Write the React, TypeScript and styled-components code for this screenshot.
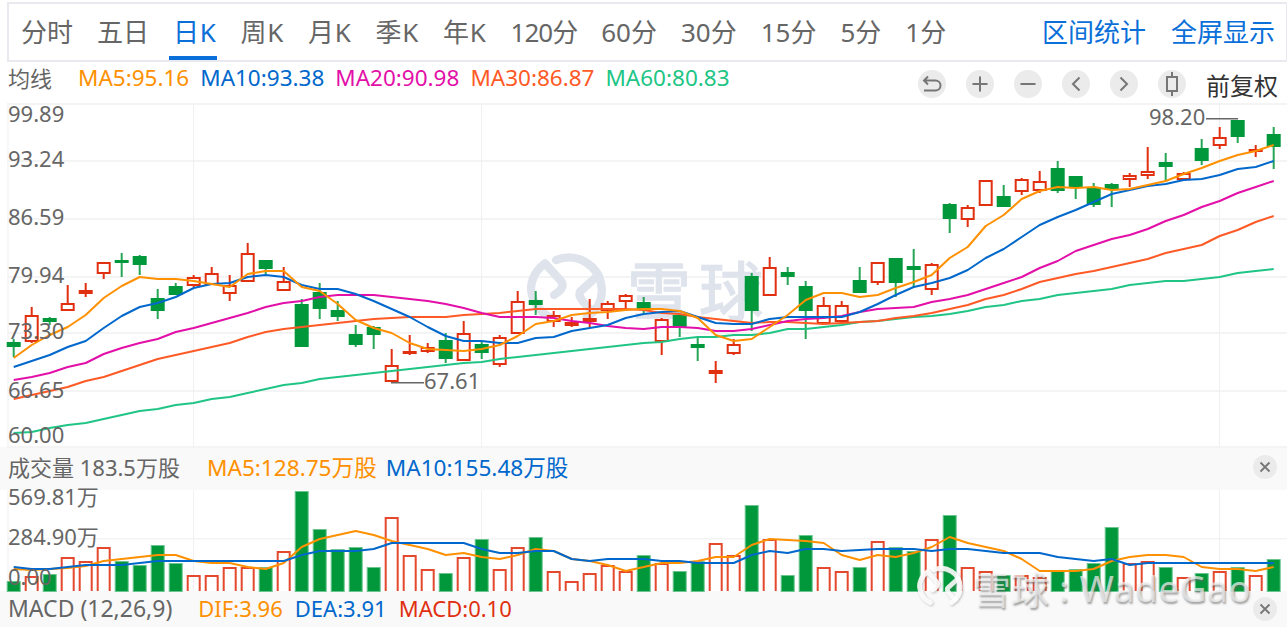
import React, { FC } from 'react';
import styled, { createGlobalStyle } from 'styled-components';

const RED = '#e03010';
const GREEN = '#00983a';
const ORANGE = '#ff9000';
const BLUE = '#0068cc';
const MAGENTA = '#e20fa8';
const CORAL = '#ff5a26';
const MINT = '#20c585';
const GRID = '#f4f4f5';

const GlobalStyle = createGlobalStyle`
	html, body {
		margin: 0;
		padding: 0;
		background: #fff;
		overflow: hidden;
	}
	body {
		font-family: 'Noto Sans', 'Noto Sans CJK SC', sans-serif;
	}
`;

const Page = styled.div`
	position: relative;
	width: 1287px;
	height: 627px;
	padding-top: 2px;
	box-sizing: border-box;
	overflow: hidden;
`;

const Toolbar = styled.div`
	display: flex;
	justify-content: space-between;
	align-items: stretch;
	height: 60px;
	margin-left: 7px;
	padding: 0 11px 0 12px;
	box-sizing: border-box;
	border: 2px solid #e9e9f0;
	border-right-width: 1px;
`;

const TabGroup = styled.div<{ $gap: number }>`
	display: flex;
	gap: ${p => p.$gap}px;
`;

const Tab = styled.span<{ $active?: boolean; $action?: boolean; $spacing?: number }>`
	position: relative;
	display: flex;
	align-items: center;
	padding-bottom: 2px;
	font-size: 26px;
	white-space: nowrap;
	color: ${p => (p.$active || p.$action ? '#0a6fd8' : '#666')};
	letter-spacing: ${p => p.$spacing || 0}px;
	&::after {
		content: '';
		display: ${p => (p.$active ? 'block' : 'none')};
		position: absolute;
		left: -4px;
		right: 0;
		bottom: 0;
		height: 4px;
		background: #0a6fd8;
	}
`;

const LegendRow = styled.div`
	display: flex;
	justify-content: space-between;
	height: 41px;
	padding: 0 9px 0 8px;
`;

const LegendLeft = styled.div`
	display: flex;
	align-items: center;
	height: 30px;
	font-size: 22.5px;
	white-space: nowrap;
`;

const LegendTitle = styled.span`
	color: #666;
	font-size: 22px;
	margin-right: 26px;
`;

const MaValue = styled.span<{ $color: string }>`
	color: ${p => p.$color};
	margin-right: 11px;
`;

const LegendRight = styled.div`
	display: flex;
	align-items: center;
	height: 44px;
`;

const RoundButton = styled.span<{ $size?: number }>`
	display: flex;
	align-items: center;
	justify-content: center;
	width: ${p => p.$size || 28}px;
	height: ${p => p.$size || 28}px;
	margin-left: 20px;
	border-radius: 50%;
	background: #ebebeb;
	color: #767676;
`;

const AdjustLabel = styled.span`
	margin-left: 20px;
	font-size: 24px;
	color: #333;
`;

const ChartSvg = styled.svg`
	display: block;
	width: 1287px;
	overflow: visible;
`;

const AxisText = styled.text`
	font-size: 22px;
	fill: #666;
`;

const WatermarkText = styled.text`
	font-size: 64px;
	letter-spacing: 8px;
	fill: #dfe3ec;
	stroke: #dfe3ec;
	stroke-width: 1.5px;
`;

const PanelHeader = styled.div<{ $height: number; $lift: number; $size: number }>`
	display: flex;
	align-items: center;
	height: ${p => p.$height}px;
	padding: 0 10px ${p => p.$lift}px 8px;
	box-sizing: border-box;
	background: #f9f9f9;
	font-size: ${p => p.$size}px;
	white-space: nowrap;
`;

const PanelTitle = styled.span<{ $size: number; $gap: number }>`
	color: #666;
	font-size: ${p => p.$size}px;
	margin-right: ${p => p.$gap}px;
`;

const PanelValue = styled.span<{ $color: string; $gap: number }>`
	color: ${p => p.$color};
	margin-right: ${p => p.$gap}px;
`;

const PushRight = styled.span`
	margin-left: auto;
	margin-top: 2px;
	display: flex;
`;

const FooterMark = styled.div`
	position: absolute;
	left: 917px;
	top: 560px;
	display: flex;
	align-items: center;
	white-space: nowrap;
	color: rgba(238, 238, 238, 0.72);
	text-shadow: 1px 2px 2px rgba(100, 100, 100, 0.6);
	pointer-events: none;
`;

const MarkLogo = styled.svg`
	width: 46px;
	height: 46px;
	filter: drop-shadow(1px 1px 1px rgba(120, 120, 120, 0.45));
`;

const MarkCjk = styled.span`
	margin-left: 10px;
	font-size: 38px;
`;

const MarkLatin = styled.span`
	margin-left: 10px;
	font-size: 37px;
	letter-spacing: 0.5px;
`;

// wick top, wick bottom, body top, body bottom, kind: 0 falling (green), 1 rising (red hollow), 2 thin rising (solid)
const CANDLES: number[][] = [
	[339, 357, 342, 347, 0], [307, 343, 315, 342, 1], [317, 325, 318, 322, 0], [285, 311, 303, 311, 1],
	[283, 297, 290, 294, 2], [262, 279, 262, 274, 1], [253, 277, 260, 263, 0], [255, 275, 256, 265, 0],
	[289, 319, 298, 311, 0], [283, 295, 286, 295, 0], [275, 287, 277, 286, 1], [267, 285, 273, 285, 1],
	[275, 301, 285, 294, 1], [243, 282, 253, 282, 1], [260, 274, 260, 269, 0], [267, 291, 281, 291, 1],
	[299, 347, 304, 347, 0], [283, 319, 292, 309, 0], [301, 321, 310, 317, 0], [325, 347, 334, 345, 0],
	[326, 349, 327, 335, 0], [349, 382, 365, 382, 1], [335, 355, 351, 354, 1], [343, 353, 347, 352, 1],
	[333, 363, 340, 359, 0], [321, 361, 333, 361, 1], [342, 359, 344, 353, 0], [335, 367, 337, 365, 1],
	[291, 334, 301, 334, 1], [291, 315, 300, 305, 0], [311, 327, 315, 322, 1], [317, 327, 322, 326, 2],
	[299, 327, 318, 322, 2], [301, 319, 303, 311, 1], [294, 309, 295, 302, 1], [297, 313, 302, 309, 0],
	[318, 355, 319, 342, 1], [313, 337, 315, 328, 0], [338, 361, 344, 348, 0], [361, 383, 370, 374, 2],
	[339, 355, 344, 354, 1], [273, 331, 276, 311, 0], [257, 296, 267, 296, 1], [267, 285, 272, 277, 0],
	[281, 339, 286, 311, 0], [297, 324, 305, 324, 1], [301, 323, 305, 322, 1], [267, 293, 280, 293, 0],
	[262, 285, 262, 283, 1], [258, 297, 258, 283, 0], [249, 288, 266, 270, 0], [263, 295, 264, 290, 1],
	[203, 233, 204, 219, 0], [205, 227, 207, 220, 1], [180, 206, 180, 206, 1], [185, 207, 196, 207, 0],
	[178, 195, 179, 192, 1], [171, 193, 181, 191, 1], [161, 193, 168, 191, 0], [176, 199, 176, 187, 0],
	[183, 207, 187, 205, 0], [183, 207, 184, 189, 0], [173, 187, 175, 180, 1], [147, 179, 171, 176, 1],
	[153, 182, 162, 167, 0], [172, 181, 173, 180, 1], [139, 165, 148, 161, 0], [127, 149, 137, 146, 1],
	[120, 143, 120, 137, 0], [145, 157, 149, 152, 2], [127, 169, 134, 147, 0],
];

const PRICE_LINES: { color: string; ys: number[] }[] = [
	{ color: MINT, ys: [433, 432, 428, 425, 423, 419, 415, 411, 409, 405, 403, 399, 397, 393, 389, 385, 383, 379, 377, 375, 373, 371, 369, 367, 365, 363, 362, 359, 357, 355, 353, 351, 349, 347, 345, 343, 342, 339, 337, 337, 335, 335, 333, 329, 329, 327, 325, 322, 321, 319, 317, 316, 314, 311, 307, 305, 301, 299, 295, 293, 291, 289, 285, 283, 281, 281, 279, 277, 273, 271, 269] },
	{ color: CORAL, ys: [399, 395, 391, 387, 381, 377, 371, 365, 359, 355, 351, 347, 343, 337, 332, 329, 327, 325, 323, 321, 319, 318, 317, 317, 317, 315, 314, 313, 311, 309, 309, 309, 309, 309, 309, 310, 313, 314, 317, 319, 321, 323, 322, 322, 323, 324, 323, 322, 321, 318, 316, 313, 309, 305, 299, 295, 289, 282, 278, 274, 271, 267, 263, 259, 253, 249, 245, 236, 230, 222, 216] },
	{ color: MAGENTA, ys: [380, 377, 373, 367, 363, 354, 348, 343, 339, 332, 328, 323, 318, 313, 307, 303, 301, 297, 295, 295, 295, 297, 299, 301, 304, 308, 313, 317, 317, 317, 318, 321, 323, 326, 328, 329, 327, 327, 328, 331, 331, 329, 325, 321, 319, 318, 316, 312, 309, 308, 307, 302, 299, 295, 289, 283, 277, 268, 261, 251, 245, 239, 235, 229, 221, 215, 207, 201, 193, 187, 181] },
	{ color: BLUE, ys: [367, 361, 355, 347, 341, 328, 316, 307, 303, 297, 288, 284, 283, 277, 275, 277, 285, 289, 289, 294, 301, 309, 317, 327, 336, 341, 341, 343, 343, 338, 337, 331, 328, 325, 318, 314, 312, 311, 317, 323, 324, 324, 319, 317, 317, 317, 317, 312, 304, 295, 287, 283, 278, 270, 258, 249, 237, 225, 217, 210, 202, 194, 190, 186, 184, 180, 179, 175, 169, 167, 161] },
	{ color: ORANGE, ys: [358, 345, 335, 327, 315, 298, 286, 277, 279, 279, 281, 284, 287, 274, 271, 271, 287, 291, 304, 320, 328, 333, 343, 349, 350, 351, 349, 345, 336, 324, 321, 315, 313, 312, 310, 309, 309, 311, 318, 335, 341, 339, 327, 315, 300, 293, 293, 297, 295, 288, 282, 275, 258, 247, 226, 215, 199, 191, 187, 188, 187, 190, 189, 185, 181, 174, 168, 161, 155, 151, 145] },
];

// bar top, 1 = rising (red hollow)
const VOLUME: number[][] = [
	[581, 0], [576, 1], [574, 0], [557, 1], [561, 1], [547, 1], [561, 0], [565, 0], [545, 0], [563, 0], [575, 1], [575, 1],
	[567, 1], [567, 1], [567, 0], [551, 1], [491, 0], [529, 0], [549, 0], [547, 0], [567, 0], [517, 1], [555, 1], [569, 1],
	[573, 0], [557, 1], [539, 0], [569, 1], [547, 1], [537, 0], [571, 1], [581, 1], [573, 1], [565, 1], [571, 1], [555, 0],
	[563, 1], [571, 0], [561, 0], [543, 1], [555, 1], [505, 0], [539, 1], [575, 0], [535, 0], [567, 1], [571, 1], [567, 0],
	[541, 1], [547, 0], [551, 0], [539, 1], [515, 0], [567, 1], [571, 1], [575, 0], [575, 1], [577, 1], [571, 0], [569, 0],
	[563, 0], [527, 0], [563, 1], [561, 1], [567, 0], [577, 1], [573, 0], [571, 1], [567, 0], [575, 1], [559, 0],
];

const VOLUME_LINES: { color: string; ys: number[] }[] = [
	{ color: ORANGE, ys: [569, 570, 569, 568, 566, 561, 559, 557, 555, 555, 561, 563, 563, 567, 569, 563, 547, 539, 535, 531, 535, 541, 545, 549, 555, 553, 557, 559, 555, 549, 551, 559, 561, 565, 571, 567, 563, 563, 561, 557, 557, 545, 539, 540, 541, 543, 555, 560, 555, 557, 553, 547, 537, 543, 547, 551, 559, 571, 571, 571, 569, 561, 557, 555, 555, 557, 567, 569, 569, 571, 567] },
	{ color: BLUE, ys: [567, 569, 569, 567, 565, 565, 565, 563, 561, 561, 561, 561, 561, 561, 561, 561, 555, 551, 551, 551, 549, 543, 543, 543, 543, 543, 549, 553, 553, 551, 551, 559, 561, 559, 559, 559, 561, 561, 563, 563, 563, 555, 551, 553, 549, 549, 551, 550, 549, 549, 549, 551, 549, 549, 551, 553, 553, 553, 557, 559, 561, 559, 565, 563, 563, 563, 563, 563, 563, 563, 563] },
];

const GRID_COLUMNS = [193, 481, 1219];
const PRICE_ROWS = [104, 161, 219, 277, 333, 391, 447];
const PRICE_AXIS: [string, number][] = [['99.89', 122], ['93.24', 167], ['86.59', 225], ['79.94', 283], ['73.30', 339], ['66.65', 398], ['60.00', 443]];
const VOLUME_AXIS: [string, number][] = [['569.81万', 505], ['284.90万', 545], ['0.00', 585]];
const INTERVALS = ['分时', '五日', '日K', '周K', '月K', '季K', '年K', '120分', '60分', '30分', '15分', '5分', '1分'];
const MA_VALUES: [string, string][] = [['MA5:95.16', ORANGE], ['MA10:93.38', BLUE], ['MA20:90.98', MAGENTA], ['MA30:86.87', CORAL], ['MA60:80.83', MINT]];

const columnX = (i: number) => 13.7 + i * 18;
const toPoints = (ys: number[]) => ys.map((y, i) => `${columnX(i)},${y}`).join(' ');
const tabSpacing = (label: string) => (label.endsWith('K') ? 0.7 : label === '120分' ? -1 : 0);

const LogoPaths: FC = () => (
	<g fill="none" strokeLinecap="round" strokeLinejoin="round" strokeWidth={25}>
		<path d="M372 255C388 245 403 230 395 215L345 160C310 185 298 225 305 250C312 285 335 310 360 322" />
		<path d="M378 150C440 125 510 165 515 235C518 275 495 305 470 322" />
		<path d="M505 195L450 245C440 258 470 290 490 305" />
	</g>
);

const Candle: FC<{ data: number[]; x: number }> = ({ data, x }) => {
	const [wickTop, wickBottom, bodyTop, bodyBottom, kind] = data;
	const color = kind === 0 ? GREEN : RED;
	return (
		<g>
			<rect x={x - 1} y={wickTop} width={2} height={wickBottom - wickTop} fill={color} opacity={kind === 0 ? 0.85 : 1} />
			{kind === 1 ? (
				<rect x={x - 6} y={bodyTop + 1} width={12} height={bodyBottom - bodyTop - 2} fill="#fff" stroke={color} strokeWidth={2} />
			) : (
				<rect x={x - 7} y={bodyTop} width={14} height={bodyBottom - bodyTop} fill={color} />
			)}
		</g>
	);
};

const VolumeBar: FC<{ top: number; up: boolean; x: number }> = ({ top, up, x }) =>
	up ? (
		<path d={`M${x - 6} 591V${top + 1}H${x + 6}V591`} fill="none" stroke={RED} strokeWidth={2} strokeOpacity={0.88} />
	) : (
		<rect x={x - 6.5} y={top + 0.5} width={13} height={591 - top} fill={GREEN} stroke="#6cc590" />
	);

const CloseIcon: FC = () => (
	<svg width="12" height="12" viewBox="0 0 12 12" fill="none" stroke="currentColor" strokeWidth="1.8">
		<path d="M1.5 1.5L10.5 10.5M10.5 1.5L1.5 10.5" />
	</svg>
);

const TOOL_ICONS = [
	<path key="back" d="M4 8.5H15.5a5 5 0 0 1 0 10H4M8 4.5l-4 4 4 4" />,
	<path key="plus" d="M12 4.5v15M4.5 12h15" />,
	<path key="minus" d="M4.5 12h15" />,
	<path key="prev" d="M15.5 5.5L9 12l6.5 6.5" />,
	<path key="next" d="M8.5 5.5L15 12l-6.5 6.5" />,
	<path key="candle" d="M12 0v5M12 19v5M7 5h10v14H7z" />,
];

const App: FC = () => (
	<Page>
		<GlobalStyle />
		<Toolbar>
			<TabGroup $gap={24}>
				{INTERVALS.map(label => (
					<Tab key={label} $active={label === '日K'} $spacing={tabSpacing(label)}>{label}</Tab>
				))}
			</TabGroup>
			<TabGroup $gap={25}>
				<Tab $action>区间统计</Tab>
				<Tab $action>全屏显示</Tab>
			</TabGroup>
		</Toolbar>
		<LegendRow>
			<LegendLeft>
				<LegendTitle>均线</LegendTitle>
				{MA_VALUES.map(([text, color]) => (
					<MaValue key={text} $color={color}>{text}</MaValue>
				))}
			</LegendLeft>
			<LegendRight>
				{TOOL_ICONS.map(icon => (
					<RoundButton key={icon.key}>
						<svg width="24" height="24" viewBox="0 0 24 24" fill="none" stroke="currentColor" strokeWidth="2">
							{icon}
						</svg>
					</RoundButton>
				))}
				<AdjustLabel>前复权</AdjustLabel>
			</LegendRight>
		</LegendRow>
		<ChartSvg height="344" viewBox="0 103 1287 344">
			{PRICE_ROWS.map(y => (
				<rect key={y} x={7} y={y - 1} width={1280} height={2} fill={GRID} />
			))}
			{[7.5, ...GRID_COLUMNS].map(x => (
				<rect key={x} x={x} y={103} width={1} height={344} fill="#f0f0f2" />
			))}
			<g stroke="#dfe3ec">
				<svg x={526.7} y={251.7} width={80} height={80} viewBox="290 125 240 240" overflow="visible">
					<LogoPaths />
				</svg>
			</g>
			<WatermarkText x={627} y={315}>雪球</WatermarkText>
			{CANDLES.map((candle, i) => (
				<Candle key={i} data={candle} x={columnX(i)} />
			))}
			{PRICE_LINES.map(line => (
				<polyline key={line.color} points={toPoints(line.ys)} fill="none" stroke={line.color} strokeWidth={2} strokeLinejoin="round" />
			))}
			<rect x={391} y={382} width={33} height={1.5} fill="#666" />
			<AxisText x={424} y={389}>67.61</AxisText>
			<rect x={1206} y={118} width={32} height={1.5} fill="#666" />
			<AxisText x={1149} y={125}>98.20</AxisText>
			{PRICE_AXIS.map(([text, y]) => (
				<AxisText key={text} x={8} y={y}>{text}</AxisText>
			))}
		</ChartSvg>
		<PanelHeader $height={43} $lift={5} $size={22.6}>
			<PanelTitle $size={22} $gap={27}>成交量 183.5万股</PanelTitle>
			<PanelValue $color={ORANGE} $gap={9}>MA5:128.75万股</PanelValue>
			<PanelValue $color={BLUE} $gap={9}>MA10:155.48万股</PanelValue>
			<PushRight>
				<RoundButton $size={24}><CloseIcon /></RoundButton>
			</PushRight>
		</PanelHeader>
		<ChartSvg height="101" viewBox="0 490 1287 101">
			<rect x={7} y={538} width={1280} height={1.5} fill={GRID} />
			{[7.5, ...GRID_COLUMNS].map(x => (
				<rect key={x} x={x} y={490} width={1} height={101} fill="#f0f0f2" />
			))}
			{VOLUME.map(([top, up], i) => (
				<VolumeBar key={i} top={top} up={up === 1} x={columnX(i)} />
			))}
			{VOLUME_LINES.map(line => (
				<polyline key={line.color} points={toPoints(line.ys)} fill="none" stroke={line.color} strokeWidth={2} strokeLinejoin="round" />
			))}
			{VOLUME_AXIS.map(([text, y]) => (
				<AxisText key={text} x={8} y={y}>{text}</AxisText>
			))}
		</ChartSvg>
		<PanelHeader $height={36} $lift={3} $size={22}>
			<PanelTitle $size={23} $gap={26}>MACD (12,26,9)</PanelTitle>
			<PanelValue $color={ORANGE} $gap={12}>DIF:3.96</PanelValue>
			<PanelValue $color={BLUE} $gap={12}>DEA:3.91</PanelValue>
			<PanelValue $color={RED} $gap={12}>MACD:0.10</PanelValue>
			<PushRight>
				<RoundButton $size={24}><CloseIcon /></RoundButton>
			</PushRight>
		</PanelHeader>
		<FooterMark>
			<MarkLogo viewBox="290 125 240 240" stroke="rgba(255,255,255,0.88)">
				<LogoPaths />
			</MarkLogo>
			<MarkCjk>雪球</MarkCjk>
			<MarkLatin>: WadeGao</MarkLatin>
		</FooterMark>
	</Page>
);

export default App;
